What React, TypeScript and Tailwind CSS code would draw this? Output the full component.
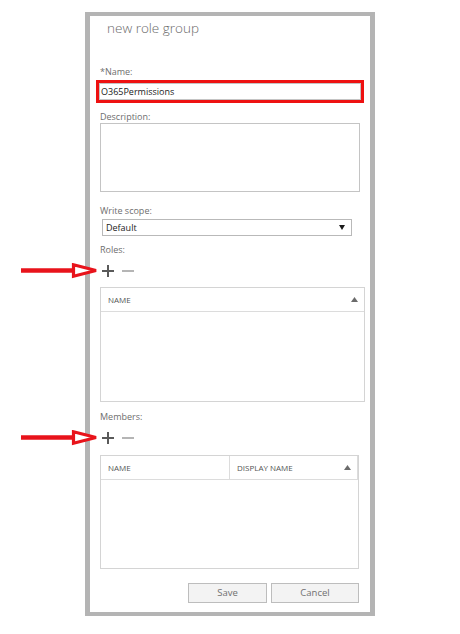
import React from 'react';

const PlusMinus: React.FC = () => {
  return (
    <div className="relative mt-[7px] flex h-[14px] items-center gap-[8px] pl-[2px]">
      {/* red annotation arrow */}
      <svg className="absolute left-[-79px] top-[-1px]" width="78" height="16" viewBox="0 0 78 16">
        <line x1="0" y1="7.5" x2="53" y2="7.5" stroke="#e8131b" strokeWidth="4.5" />
        <polygon points="52.5,1.8 75,7.5 52.5,13.2" fill="#ffffff" stroke="#e8131b" strokeWidth="3.2" strokeLinejoin="miter" />
      </svg>
      <svg width="12" height="12" viewBox="0 0 12 12">
        <line x1="0" y1="6" x2="12" y2="6" stroke="#5a5a5a" strokeWidth="2" />
        <line x1="6" y1="0" x2="6" y2="12" stroke="#5a5a5a" strokeWidth="2" />
      </svg>
      <svg width="12" height="12" viewBox="0 0 12 12">
        <line x1="0" y1="6" x2="12" y2="6" stroke="#a3a3a3" strokeWidth="1.6" />
      </svg>
    </div>
  );
};

const SortUp: React.FC = () => (
  <svg width="7" height="5" viewBox="0 0 7 5">
    <polygon points="0,5 3.5,0 7,5" fill="#6b6b6b" />
  </svg>
);

const App: React.FC = () => {
  return (
    <div className="min-h-screen bg-white font-['Open_Sans',sans-serif]">
      <div className="ml-[85px] pt-[12px]">
        <div className="flex h-[604px] w-[290px] flex-col border-x-[5px] border-y-[4px] border-[#b4b4b4] bg-white pl-[10px]">
          <div className="mt-[3px] pl-[7px] text-[13.5px] leading-[18px] font-light text-[#6a6a6a]">new role group</div>

          <div className="mt-[28px] text-[9px] leading-[14px] text-[#6e6e6e]">*Name:</div>
          <div className="mt-[1px] ml-[-4px] h-[23px] w-[268px] border-[3px] border-[#ee1111] bg-white">
            <div className="flex h-full items-center border border-[#c4c4c4] pl-[1px] text-[9px] text-[#1a1a1a]">
              O365Permissions
            </div>
          </div>

          <div className="mt-[7px] text-[9px] leading-[13px] text-[#6e6e6e]">Description:</div>
          <div className="h-[69px] w-[260px] border border-[#c4c4c4] bg-white" />

          <div className="mt-[12px] text-[9px] leading-[14px] text-[#6e6e6e]">Write scope:</div>
          <div className="mt-[1px] ml-[2px] flex h-[17px] w-[250px] items-center justify-between border border-[#b9b9b9] pr-[6px] pl-[3px] text-[9px] text-[#1a1a1a]">
            <span>Default</span>
            <svg width="6" height="5" viewBox="0 0 6 5">
              <polygon points="0,0 6,0 3,5" fill="#1a1a1a" />
            </svg>
          </div>

          <div className="mt-[7px] text-[9px] leading-[14px] text-[#6e6e6e]">Roles:</div>
          <PlusMinus />
          <div className="mt-[9px] h-[115px] w-[265px] border border-[#d4d4d4]">
            <div className="flex h-[24px] items-center justify-between border-b border-[#dcdcdc] pr-[6px] pl-[7px] text-[8px] text-[#555555]">
              <span>NAME</span>
              <SortUp />
            </div>
          </div>

          <div className="mt-[8px] text-[9px] leading-[14px] text-[#6e6e6e]">Members:</div>
          <PlusMinus />
          <div className="mt-[10px] h-[114px] w-[259px] border border-[#d4d4d4]">
            <div className="flex h-[24px] border-b border-[#dcdcdc] text-[8px] text-[#555555]">
              <div className="flex w-[129px] items-center border-r border-[#dcdcdc] pl-[7px]">NAME</div>
              <div className="flex flex-1 items-center justify-between border-r border-[#dcdcdc] pr-[6px] pl-[7px]">
                <span>DISPLAY NAME</span>
                <SortUp />
              </div>
            </div>
          </div>

          <div className="mt-[14px] flex justify-end gap-[4px] pr-[11px]">
            <div className="flex h-[20px] w-[79px] items-center justify-center border border-[#bdbdbd] bg-[#f3f3f3] text-[9.5px] text-[#707070]">Save</div>
            <div className="flex h-[20px] w-[88px] items-center justify-center border border-[#bdbdbd] bg-[#f3f3f3] text-[9.5px] text-[#707070]">Cancel</div>
          </div>
        </div>
      </div>
    </div>
  );
};

export default App;
